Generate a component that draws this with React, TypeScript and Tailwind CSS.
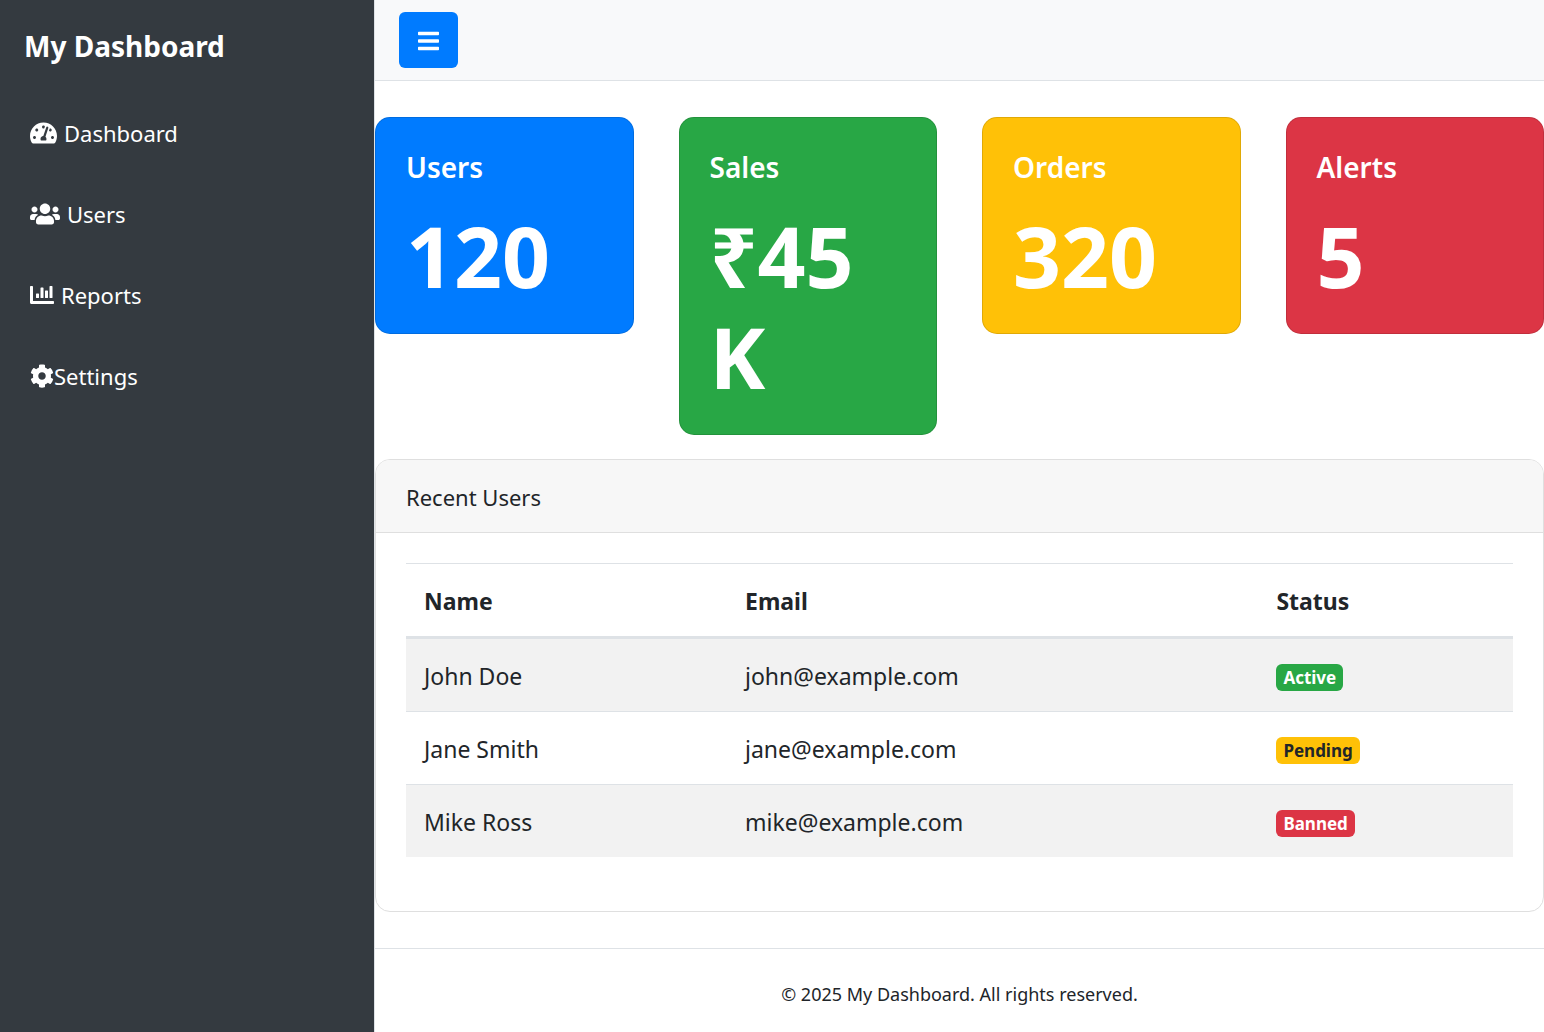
import {
  FaBars,
  FaChartBar,
  FaCog,
  FaTachometerAlt,
  FaUsers,
} from "react-icons/fa";
import clsx from "clsx";

const links = [
  { label: "Dashboard", icon: FaTachometerAlt, iconWidth: "w-[27px]", gap: "gap-[7px]" },
  { label: "Users", icon: FaUsers, iconWidth: "w-[30px]", gap: "gap-[7px]" },
  { label: "Reports", icon: FaChartBar, iconWidth: "w-6", gap: "gap-[7px]" },
  { label: "Settings", icon: FaCog, iconWidth: "w-6", gap: "gap-0" },
];

const stats = [
  { title: "Users", value: "120", color: "bg-[#007bff]" },
  { title: "Sales", value: "₹45K", color: "bg-[#28a745]" },
  { title: "Orders", value: "320", color: "bg-[#ffc107]" },
  { title: "Alerts", value: "5", color: "bg-[#dc3545]" },
];

const users = [
  { name: "John Doe", email: "john@example.com", status: "Active", badge: "bg-[#28a745] text-white" },
  { name: "Jane Smith", email: "jane@example.com", status: "Pending", badge: "bg-[#ffc107] text-[#212529]" },
  { name: "Mike Ross", email: "mike@example.com", status: "Banned", badge: "bg-[#dc3545] text-white" },
];

function Sidebar() {
  return (
    <aside className="w-[375px] shrink-0 border-r border-[#dee2e6] bg-[#343a40] text-white">
      <h1 className="px-6 pt-7 text-[28px] leading-9 font-bold">My Dashboard</h1>
      <nav className="mt-7">
        {links.map(({ label, icon: Icon, iconWidth, gap }) => (
          <a
            key={label}
            href="#"
            className={clsx("flex h-[81px] items-center px-[30px] text-[22px] leading-9", gap)}
          >
            <Icon className={clsx("h-6 shrink-0", iconWidth)} />
            <span>{label}</span>
          </a>
        ))}
      </nav>
    </aside>
  );
}

function StatCards() {
  return (
    <section className="grid grid-cols-4 items-start gap-[45px]">
      {stats.map((s) => (
        <div
          key={s.title}
          className={clsx(
            "rounded-[15px] border border-black/12 px-[30px] pt-[31px] pb-[27px] text-white",
            s.color,
          )}
        >
          <h2 className="mb-5 text-[28px] leading-9 font-semibold">{s.title}</h2>
          <p className="text-[84px] leading-[101px] font-bold wrap-anywhere">{s.value}</p>
        </div>
      ))}
    </section>
  );
}

function RecentUsers() {
  return (
    <section className="mt-6 rounded-[15px] border border-[#dfdfdf] bg-white">
      <h2 className="rounded-t-[14px] border-b border-[#dfdfdf] bg-[#f7f7f7] px-[30px] pt-[19px] pb-[17px] text-[22px] leading-9">
        Recent Users
      </h2>
      <div className="px-[30px] pt-[30px] pb-[54px]">
        <table className="w-full table-fixed border-separate border-spacing-0 text-left text-[23px] leading-9">
          <colgroup>
            <col className="w-[29%]" />
            <col className="w-[48%]" />
            <col />
          </colgroup>
          <thead>
            <tr>
              {["Name", "Email", "Status"].map((h) => (
                <th
                  key={h}
                  scope="col"
                  className="border-t border-b-3 border-[#dee2e6] px-[18px] pt-[19px] pb-[17px] font-bold"
                >
                  {h}
                </th>
              ))}
            </tr>
          </thead>
          <tbody className="[&_td]:border-[#dee2e6] [&_td]:px-[18px] [&_td]:pt-[19px] [&_td]:pb-[17px] [&_tr:not(:last-child)>td]:border-b">
            {users.map((u) => (
              <tr key={u.name} className="odd:bg-[#f2f2f2]">
                <td>{u.name}</td>
                <td>{u.email}</td>
                <td>
                  <div className="flex h-9 items-center pt-[3px]">
                    <span
                      className={clsx(
                        "rounded-md px-[7px] pt-px text-[17px] leading-[26px] font-bold",
                        u.badge,
                      )}
                    >
                      {u.status}
                    </span>
                  </div>
                </td>
              </tr>
            ))}
          </tbody>
        </table>
      </div>
    </section>
  );
}

export default function App() {
  return (
    <div className="flex min-h-screen bg-white font-['Noto_Sans',sans-serif] text-[#212529]">
      <Sidebar />
      <div className="flex min-w-0 flex-1 flex-col">
        <header className="border-b border-[#dee2e6] bg-[#f8f9fa] px-6 py-3">
          <button
            type="button"
            aria-label="Toggle sidebar"
            className="flex h-14 items-center rounded-md bg-[#007bff] px-[19px] pt-0.5 text-white"
          >
            <FaBars className="h-6 w-[21px]" />
          </button>
        </header>
        <main className="pt-9">
          <StatCards />
          <RecentUsers />
        </main>
        <footer className="mt-9 border-t border-[#dee2e6] py-[30px] text-center text-[18px] leading-[30px]">
          © 2025 My Dashboard. All rights reserved.
        </footer>
      </div>
    </div>
  );
}
